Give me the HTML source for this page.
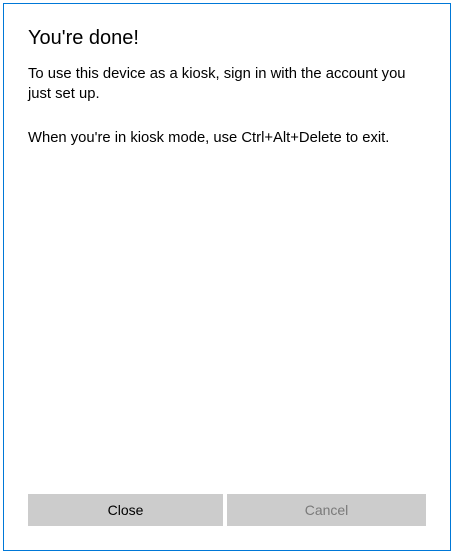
<!DOCTYPE html>
<html><head><meta charset="utf-8"><style>
html,body{margin:0;padding:0;width:451px;height:553px;background:#fff;overflow:hidden;font-family:"Liberation Sans",sans-serif;}
.dlg{position:absolute;left:3px;top:3px;width:446px;height:546px;border:1px solid #0078d7;background:#fff;}
h1{position:absolute;left:24px;top:23px;margin:0;font-size:20px;font-weight:normal;color:#000;}
.p{position:absolute;left:24px;font-size:14.8px;color:#000;line-height:20px;width:385px;}
.btn{position:absolute;top:490px;height:32px;background:#cccccc;font-size:14px;text-align:center;line-height:32px;}
</style></head><body>
<div class="dlg">
<h1>You're done!</h1>
<div class="p" style="top:60px">To use this device as a kiosk, sign in with the account you just set up.</div>
<div class="p" style="top:124px">When you're in kiosk mode, use Ctrl+Alt+Delete to exit.</div>
<div class="btn" style="left:24px;width:195px;color:#000;">Close</div>
<div class="btn" style="left:223px;width:199px;color:#7a7a7a;">Cancel</div>
</div>
</body></html>
